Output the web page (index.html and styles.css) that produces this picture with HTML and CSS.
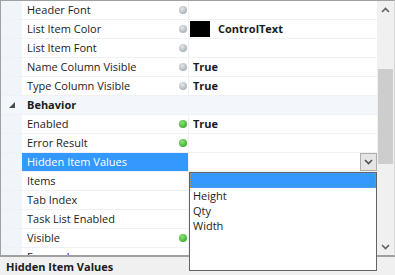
FILE: index.html
```html
<!DOCTYPE html>
<html lang="en">
<head>
  <meta charset="UTF-8" />
  <title>Property Grid</title>
  <link rel="stylesheet" href="styles.css">
</head>
<body>
  <div class="window">
    <div class="grid">
      <div class="rows">
        <div class="row">
          <div class="gutter"></div>
          <div class="name">Header Font<span class="dot"></span></div>
          <div class="value"></div>
        </div>
        <div class="row">
          <div class="gutter"></div>
          <div class="name">List Item Color<span class="dot"></span></div>
          <div class="value"><span class="swatch"></span><b>ControlText</b></div>
        </div>
        <div class="row">
          <div class="gutter"></div>
          <div class="name">List Item Font<span class="dot"></span></div>
          <div class="value"></div>
        </div>
        <div class="row">
          <div class="gutter"></div>
          <div class="name">Name Column Visible<span class="dot"></span></div>
          <div class="value"><b>True</b></div>
        </div>
        <div class="row">
          <div class="gutter"></div>
          <div class="name">Type Column Visible<span class="dot"></span></div>
          <div class="value"><b>True</b></div>
        </div>
        <div class="row category">
          <div class="gutter">
            <svg width="6" height="6" viewBox="0 0 6 6"><polygon points="6,0 6,6 0,6" fill="#4a4a4a"/></svg>
          </div>
          <div class="name"><b>Behavior</b></div>
          <div class="value"></div>
        </div>
        <div class="row">
          <div class="gutter"></div>
          <div class="name">Enabled<span class="dot green"></span></div>
          <div class="value"><b>True</b></div>
        </div>
        <div class="row">
          <div class="gutter"></div>
          <div class="name">Error Result<span class="dot green"></span></div>
          <div class="value"></div>
        </div>
        <div class="row selected">
          <div class="gutter"></div>
          <div class="name">Hidden Item Values</div>
          <div class="value">
            <span class="drop-btn">
              <svg width="9" height="6" viewBox="0 0 9 6"><polyline points="1,1 4.5,4.5 8,1" fill="none" stroke="#505050" stroke-width="1.6"/></svg>
            </span>
          </div>
        </div>
        <div class="row">
          <div class="gutter"></div>
          <div class="name">Items</div>
          <div class="value"></div>
        </div>
        <div class="row">
          <div class="gutter"></div>
          <div class="name">Tab Index</div>
          <div class="value"></div>
        </div>
        <div class="row">
          <div class="gutter"></div>
          <div class="name">Task List Enabled</div>
          <div class="value"></div>
        </div>
        <div class="row">
          <div class="gutter"></div>
          <div class="name">Visible<span class="dot green"></span></div>
          <div class="value"></div>
        </div>
        <div class="row">
          <div class="gutter"></div>
          <div class="name">Focused</div>
          <div class="value"></div>
        </div>
      </div>
      <div class="scrollbar">
        <span class="arrow">
          <svg width="9" height="6" viewBox="0 0 9 6"><polyline points="1,5 4.5,1.5 8,5" fill="none" stroke="#606060" stroke-width="1.6"/></svg>
        </span>
        <div class="track"><div class="thumb"></div></div>
        <span class="arrow">
          <svg width="9" height="6" viewBox="0 0 9 6"><polyline points="1,1 4.5,4.5 8,1" fill="none" stroke="#606060" stroke-width="1.6"/></svg>
        </span>
      </div>
    </div>
    <div class="desc"><b>Hidden Item Values</b></div>

    <div class="dropdown">
      <div class="item focus"></div>
      <div class="item">Height</div>
      <div class="item">Qty</div>
      <div class="item">Width</div>
    </div>
  </div>
</body>
</html>
```

FILE: styles.css
```css
body {
  margin: 0;
  font-family: "Open Sans", "Noto Sans", sans-serif;
  font-size: 11px;
  color: #1b1b1b;
  background: #f0f0f0;
}

.window {
  position: relative;
  width: 395px;
  height: 275px;
  overflow: hidden;
}

.grid {
  display: flex;
  height: 254px;
  border: 1px solid #a0a0a0;
  border-right-color: #d8d8d8;
  background: #fff;
}

.rows {
  flex: 1;
  overflow: hidden;
}

.row {
  display: flex;
  height: 18px;
  border-bottom: 1px solid #eef1f6;
  line-height: 18px;
}

.gutter {
  width: 21px;
  background: #f1f4f9;
  display: flex;
  align-items: center;
  justify-content: center;
}

.name {
  position: relative;
  width: 161px;
  padding-left: 5px;
  border-right: 1px solid #eef1f6;
  white-space: nowrap;
}

.value {
  position: relative;
  flex: 1;
  padding-left: 4px;
  display: flex;
  align-items: center;
}

.dot {
  position: absolute;
  right: 1px;
  top: 5px;
  width: 8px;
  height: 8px;
  border-radius: 50%;
  background: radial-gradient(circle at 40% 35%, #e4e8ea, #a9b1b4 75%);
}

.dot.green {
  background: radial-gradient(circle at 40% 35%, #8fe27c, #3fae2e 75%);
}

.swatch {
  width: 20px;
  height: 16px;
  background: #000;
  margin: 0 8px 0 -3px;
}

.category {
  background: #f3f6fb;
}

.category .gutter {
  background: #f3f6fb;
}

.category .name {
  border-right: none;
}

.selected .name {
  background: #3399ff;
  color: #fff;
}

.drop-btn {
  position: absolute;
  right: 0;
  top: 0;
  width: 15px;
  height: 16px;
  border: 1px solid #adadad;
  background: #e5e5e5;
  display: flex;
  align-items: center;
  justify-content: center;
}

.scrollbar {
  width: 17px;
  background: #f0f0f0;
  display: flex;
  flex-direction: column;
  align-items: center;
}

.arrow {
  height: 17px;
  display: flex;
  align-items: center;
}

.track {
  flex: 1;
  width: 100%;
  padding-top: 51px;
}

.thumb {
  width: 15px;
  height: 95px;
  margin-left: 1px;
  background: #cdcdcd;
}

.desc {
  height: 19px;
  border-top: 1px solid #a0a0a0;
  padding-left: 6px;
  line-height: 19px;
  font-size: 11px;
}

.dropdown {
  position: absolute;
  left: 189px;
  top: 172px;
  width: 186px;
  height: 97px;
  border: 1px solid #646464;
  background: #fff;
}

.item {
  height: 15px;
  line-height: 15px;
  padding-left: 3px;
}

.item.focus {
  background: #3399ff;
  border: 1px dotted #d08a30;
  height: 13px;
}
```
